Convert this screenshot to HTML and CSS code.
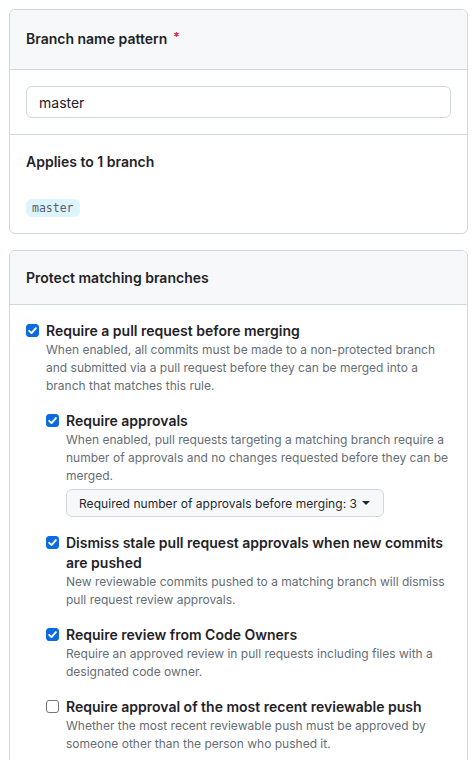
FILE: index.html
```html
<!DOCTYPE html>
<html lang="en">
<head>
<meta charset="utf-8">
<link rel="stylesheet" href="styles.css">
</head>
<body>
<div class="box">
  <div class="box-header tall">Branch name pattern <span class="req">*</span></div>
  <div class="box-row">
    <div class="input">master</div>
  </div>
  <div class="box-row">
    <div class="row-title">Applies to 1 branch</div>
    <div class="tags"><span class="tag">master</span></div>
  </div>
</div>

<div class="box">
  <div class="box-header">Protect matching branches</div>
  <div class="box-body">
    <div class="opt">
      <span class="cb on"><svg viewBox="0 0 13 13" width="13" height="13"><path d="M3.2 6.8l2.3 2.3 4.4-5" fill="none" stroke="#fff" stroke-width="1.9" stroke-linecap="round" stroke-linejoin="round"/></svg></span>
      <div class="opt-text">
        <div class="opt-label">Require a pull request before merging</div>
        <div class="opt-desc">When enabled, all commits must be made to a non-protected branch and submitted via a pull request before they can be merged into a branch that matches this rule.</div>
        <div class="sub">
          <div class="opt">
            <span class="cb on"><svg viewBox="0 0 13 13" width="13" height="13"><path d="M3.2 6.8l2.3 2.3 4.4-5" fill="none" stroke="#fff" stroke-width="1.9" stroke-linecap="round" stroke-linejoin="round"/></svg></span>
            <div class="opt-text">
              <div class="opt-label">Require approvals</div>
              <div class="opt-desc">When enabled, pull requests targeting a matching branch require a number of approvals and no changes requested before they can be merged.</div>
              <div class="btn">Required number of approvals before merging: 3 <span class="caret"></span></div>
            </div>
          </div>
          <div class="opt">
            <span class="cb on"><svg viewBox="0 0 13 13" width="13" height="13"><path d="M3.2 6.8l2.3 2.3 4.4-5" fill="none" stroke="#fff" stroke-width="1.9" stroke-linecap="round" stroke-linejoin="round"/></svg></span>
            <div class="opt-text">
              <div class="opt-label">Dismiss stale pull request approvals when new commits are pushed</div>
              <div class="opt-desc">New reviewable commits pushed to a matching branch will dismiss pull request review approvals.</div>
            </div>
          </div>
          <div class="opt">
            <span class="cb on"><svg viewBox="0 0 13 13" width="13" height="13"><path d="M3.2 6.8l2.3 2.3 4.4-5" fill="none" stroke="#fff" stroke-width="1.9" stroke-linecap="round" stroke-linejoin="round"/></svg></span>
            <div class="opt-text">
              <div class="opt-label">Require review from Code Owners</div>
              <div class="opt-desc">Require an approved review in pull requests including files with a designated code owner.</div>
            </div>
          </div>
          <div class="opt">
            <span class="cb"></span>
            <div class="opt-text">
              <div class="opt-label">Require approval of the most recent reviewable push</div>
              <div class="opt-desc">Whether the most recent reviewable push must be approved by someone other than the person who pushed it.</div>
            </div>
          </div>
        </div>
      </div>
    </div>
  </div>
</div>
</body>
</html>
```
FILE: styles.css
```css
html, body {
  margin: 0;
  background: #ffffff;
}
body {
  padding: 9px 8px 0 9px;
  font-family: Inter, "Liberation Sans", sans-serif;
  font-size: 14px;
  color: #1f2328;
}
.box {
  border: 1px solid #d0d7de;
  border-radius: 6px;
  margin-bottom: 16px;
  overflow: hidden;
}
.box-header {
  background: #f6f8fa;
  border-bottom: 1px solid #d0d7de;
  height: 53px;
  padding: 0 16px;
  display: flex;
  align-items: center;
  font-weight: 600;
  font-size: 14px;
  gap: 6px;
}
.box-header.tall {
  box-sizing: border-box;
  height: 60px;
  padding-bottom: 3px;
}
.req {
  color: #cf222e;
  font-size: 12px;
  position: relative;
  top: -2px;
}
.box-row {
  padding: 16px;
  border-bottom: 1px solid #d0d7de;
}
.box-row:last-child {
  border-bottom: none;
}
.input {
  height: 32px;
  box-sizing: border-box;
  border: 1px solid #d0d7de;
  border-radius: 6px;
  padding: 0 12px;
  display: flex;
  align-items: center;
  font-size: 14px;
}
.row-title {
  font-weight: 600;
  line-height: 21px;
}
.tags {
  margin-top: 27px;
  display: flex;
}
.tag {
  font-family: "DejaVu Sans Mono", "Liberation Mono", monospace;
  font-size: 11.5px;
  line-height: 18px;
  background: #ddf4ff;
  color: #57606a;
  padding: 0 6px;
  border-radius: 6px;
}
.box-body {
  padding: 16px;
}
.opt {
  display: flex;
  align-items: flex-start;
}
.sub .opt {
  margin-top: 16px;
}
.cb {
  flex: none;
  width: 13px;
  height: 13px;
  box-sizing: border-box;
  border-radius: 3px;
  border: 1px solid #767676;
  background: #fff;
  margin-top: 3px;
  margin-right: 7px;
  display: flex;
}
.cb.on {
  background: #0b6bdf;
  border-color: #0b6bdf;
}
.cb.on svg {
  margin: -1px;
}
.opt-text {
  flex: 1;
  min-width: 0;
}
.opt-label {
  font-weight: 600;
  line-height: 20px;
}
.opt-desc {
  font-size: 12px;
  line-height: 18px;
  color: #656d76;
}
.btn {
  margin-top: 4px;
  display: inline-flex;
  align-items: center;
  height: 28px;
  box-sizing: border-box;
  padding: 0 13px 0 12px;
  background: #f6f8fa;
  border: 1px solid #d0d7de;
  border-radius: 6px;
  font-size: 12px;
  letter-spacing: 0.05px;
  color: #24292f;
  gap: 5px;
}
.caret {
  width: 0;
  height: 0;
  border-left: 4px solid transparent;
  border-right: 4px solid transparent;
  border-top: 4px solid #24292f;
}
```
